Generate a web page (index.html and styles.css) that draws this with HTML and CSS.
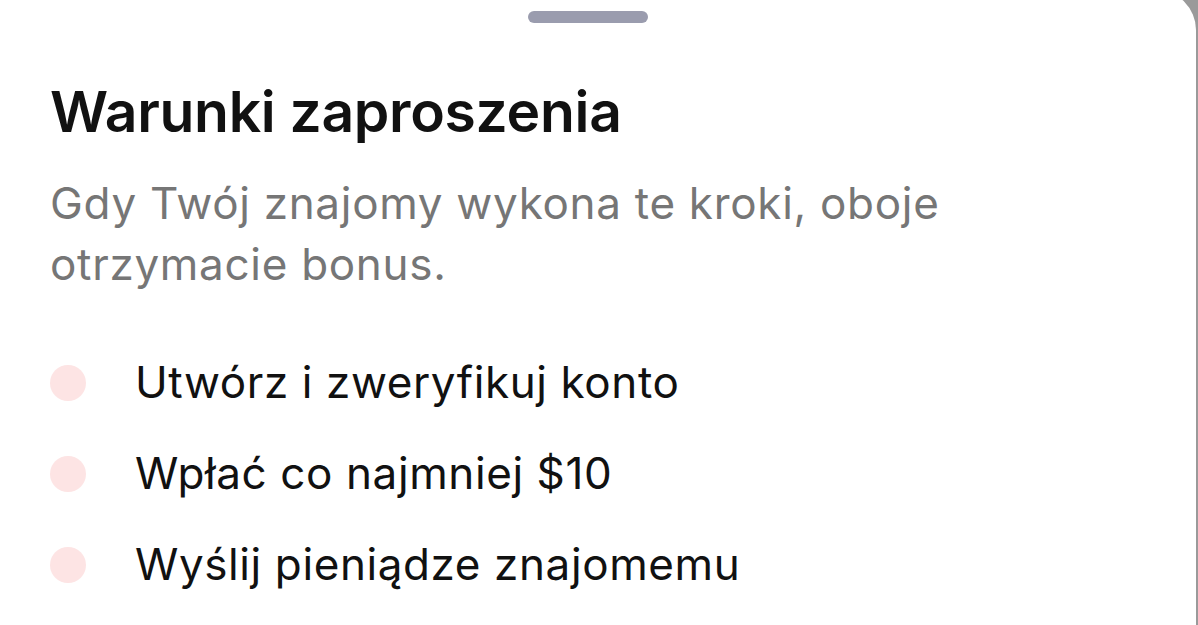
FILE: index.html
```html
<!DOCTYPE html>
<html lang="pl">
<head>
  <meta charset="UTF-8">
  <meta name="viewport" content="width=device-width, initial-scale=1.0">
  <title>Warunki zaproszenia</title>
  <link rel="stylesheet" href="styles.css">
</head>
<body>
  <div class="sheet">
    <div class="handle"></div>
    <h1 class="title">Warunki zaproszenia</h1>
    <p class="subtitle">Gdy Twój znajomy wykona te kroki, oboje otrzymacie bonus.</p>
    <ul class="steps">
      <li class="step"><span class="dot"></span>Utwórz i zweryfikuj konto</li>
      <li class="step"><span class="dot"></span>Wpłać co najmniej $10</li>
      <li class="step"><span class="dot"></span>Wyślij pieniądze znajomemu</li>
    </ul>
  </div>
</body>
</html>
```

FILE: styles.css
```css
html, body { margin: 0; height: 100%; overflow: hidden; }
body { background: #9a9a9a; font-family: Inter, "Noto Sans", sans-serif; }
.sheet { background: #fff; margin: -10px 2px 0 0; height: calc(100% + 10px); border-top-right-radius: 40px; padding: 0 0 0 50px; box-sizing: border-box; display: flex; flex-direction: column; }
.handle { width: 120px; height: 12px; border-radius: 6px; background: #9a9cae; margin: 21px 0 0 478px; }
.title { margin: 55px 0 0; font-size: 57px; font-weight: 600; color: #111; letter-spacing: -0.3px; line-height: 68px; }
.subtitle { margin: 27px 0 0; font-size: 44px; line-height: 61px; color: #767676; width: 960px; letter-spacing: 0.7px; }
.steps { list-style: none; margin: 61px 0 0; padding: 0; display: flex; flex-direction: column; gap: 39px; }
.step { display: flex; align-items: center; gap: 49px; font-size: 44px; line-height: 52px; color: #111; letter-spacing: 0.6px; }
.dot { width: 36px; height: 36px; border-radius: 50%; background: #fde4e4; flex: none; margin-top: 2px; }
```
